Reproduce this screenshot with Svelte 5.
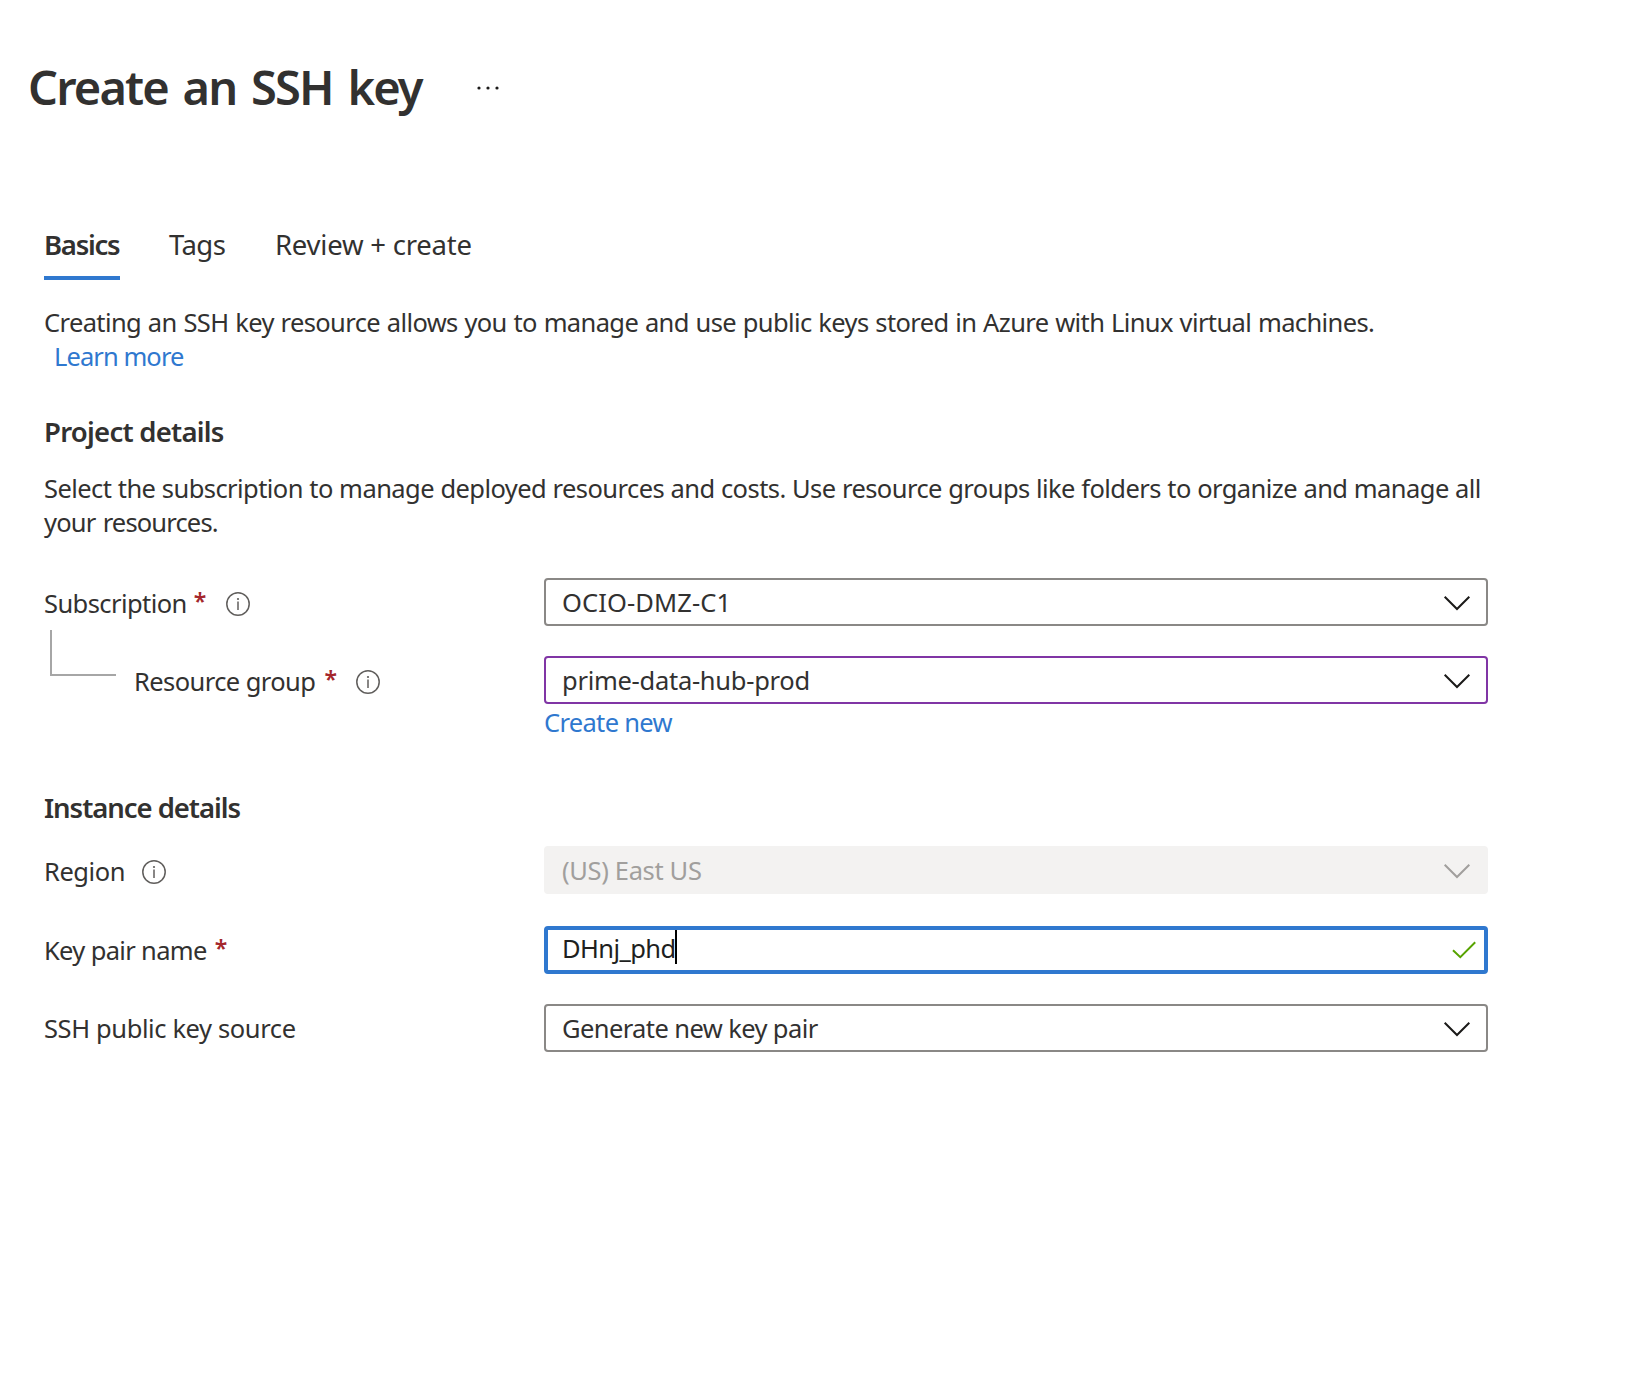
<script>
  let keyPairName = $state('DHnj_phd');
</script>

{#snippet chevron()}
  <svg class="chevron" width="28" height="16" viewBox="0 0 28 16" aria-hidden="true">
    <path d="M1.7 1.7 14 14 26.3 1.7" fill="none" stroke="currentColor" stroke-width="2" />
  </svg>
{/snippet}

{#snippet info()}
  <svg class="info" width="24" height="24" viewBox="0 0 24 24" aria-hidden="true">
    <circle cx="12" cy="12" r="11.2" fill="none" stroke="currentColor" stroke-width="1.5" />
    <path d="M12 9.4V18" stroke="currentColor" stroke-width="1.5" />
    <circle cx="12" cy="7" r="1.1" fill="currentColor" />
  </svg>
{/snippet}

<main>
  <header>
    <h1>Create an SSH key</h1>
    <svg class="more" width="22" height="4" viewBox="0 0 22 4" aria-label="More">
      <circle cx="2" cy="2" r="1.6" /><circle cx="11" cy="2" r="1.6" /><circle cx="20" cy="2" r="1.6" />
    </svg>
  </header>

  <nav>
    <span class="tab active">Basics</span>
    <span class="tab tags">Tags</span>
    <span class="tab review">Review + create</span>
  </nav>

  <p class="intro">
    Creating an SSH key resource allows you to manage and use public keys stored in Azure with Linux virtual machines.<br />
    <a class="learn" href="#learn">Learn more</a>
  </p>

  <section>
    <h2 class="project">Project details</h2>
    <p class="about">
      Select the subscription to manage deployed resources and costs. Use resource groups like folders to organize and manage all<br />
      <span class="tail">your resources.</span>
    </p>

    <div class="row first">
      <div class="label"><span class="sub">Subscription</span><b>*</b>{@render info()}</div>
      <div class="field"><span class="v-sub">OCIO-DMZ-C1</span>{@render chevron()}</div>
    </div>
    <div class="row second">
      <div class="label"><i class="branch"></i><span class="rg">Resource group</span><b>*</b>{@render info()}</div>
      <div class="field edited"><span class="v-rg">prime-data-hub-prod</span>{@render chevron()}</div>
    </div>
    <a class="create" href="#new">Create new</a>
  </section>

  <section>
    <h2 class="instance">Instance details</h2>
    <div class="row third">
      <div class="label region"><span>Region</span>{@render info()}</div>
      <div class="field disabled"><span class="v-reg">(US) East US</span>{@render chevron()}</div>
    </div>
    <div class="row fourth">
      <div class="label kp"><span>Key pair name</span><b>*</b></div>
      <div class="field focused">
        <span class="v-key">{keyPairName}</span><i class="caret"></i>
        <svg class="check" width="24" height="18" viewBox="0 0 24 18" aria-hidden="true">
          <path d="M1 9.2 8.3 16.2 23.2 1.3" fill="none" stroke="currentColor" stroke-width="2" />
        </svg>
      </div>
    </div>
    <div class="row fifth">
      <div class="label source"><span>SSH public key source</span></div>
      <div class="field"><span class="v-src">Generate new key pair</span>{@render chevron()}</div>
    </div>
  </section>
</main>

<style>
  :global(body) { background: #fff; }
  main {
    box-sizing: border-box;
    width: 1642px;
    min-height: 1396px;
    padding: 55px 0 0 44px;
    font: 25.5px/34px "Noto Sans", "Open Sans", sans-serif;
    color: #323130;
  }
  h1, h2, p { margin: 0; font-weight: 600; }
  p { font-weight: 400; white-space: nowrap; }
  a { color: #2f78cf; text-decoration: none; }

  header { display: flex; align-items: center; margin-left: -16px; height: 64px; }
  h1 { width: 449px; font-size: 47px; line-height: 64px; letter-spacing: -1.85px; word-spacing: 4.3px; white-space: nowrap; }
  .more { margin-top: 2px; fill: #1b1a19; }

  nav { display: flex; margin-top: 108px; font-size: 27.5px; line-height: 36px; white-space: nowrap; }
  .tab { padding-bottom: 13px; border-bottom: 4px solid transparent; letter-spacing: -0.23px; }
  .active { width: 76px; font-weight: 600; letter-spacing: -1.28px; border-color: #2f78cf; }
  .tags { margin-left: 49px; width: 106px; letter-spacing: -0.6px; }

  .intro { margin-top: 25px; letter-spacing: -0.62px; word-spacing: 0.73px; }
  .learn { margin-left: 10px; letter-spacing: -0.92px; word-spacing: 0; }
  h2 { font-size: 27.5px; line-height: 36px; }
  .project { margin-top: 41px; letter-spacing: -0.75px; }
  .instance { margin-top: 51px; letter-spacing: -1.05px; }
  .about { margin-top: 21px; letter-spacing: -0.56px; word-spacing: 0.27px; }
  .tail { letter-spacing: -0.84px; word-spacing: 1.5px; }

  .row { display: grid; grid-template-columns: 500px 944px; height: 48px; }
  .first { margin-top: 39px; }
  .second { margin-top: 30px; }
  .third { margin-top: 20px; }
  .fourth { margin-top: 32px; }
  .fifth { margin-top: 30px; }

  .label { display: flex; align-items: center; padding-top: 2px; white-space: nowrap; letter-spacing: -0.58px; }
  .label b { margin: -4px 0 0 7px; width: 13px; font-size: 23px; font-weight: 600; line-height: 34px; letter-spacing: 0; color: #a4262c; }
  .second b { margin-left: 9px; }
  .info { margin: 2px 0 0 19px; color: #605e5c; }
  .region { letter-spacing: -0.45px; }
  .region .info { margin-left: 17px; }
  .kp { padding-top: 0; letter-spacing: -0.66px; }
  .kp b { margin-left: 8px; }
  .source { padding-top: 0; letter-spacing: -0.39px; }
  .branch {
    box-sizing: border-box;
    align-self: flex-start;
    width: 66px;
    height: 46px;
    margin: -28px 18px 0 6px;
    border: solid #a6a6a6;
    border-width: 0 0 2px 2px;
  }

  .field {
    box-sizing: border-box;
    display: flex;
    align-items: center;
    height: 48px;
    padding: 0 15px 0 16px;
    border: 2px solid #8a8886;
    border-radius: 4px;
    white-space: nowrap;
  }
  .edited { border-color: #8035a5; }
  .disabled { background: #f3f2f1; border-color: #f3f2f1; color: #a19f9d; }
  .focused { border: 4px solid #2f78cf; padding: 0 8px 0 14px; color: #201f1e; }
  .chevron { margin: 1px 0 0 auto; color: #1b1a19; }
  .disabled .chevron { color: #a19f9d; }
  .check { margin-left: auto; color: #57a300; }
  .caret { width: 2px; height: 34px; margin: -6px 0 0 -1px; background: #000; }

  .v-sub { letter-spacing: 0.1px; }
  .v-rg { letter-spacing: -0.28px; }
  .v-reg { letter-spacing: -0.35px; }
  .v-key { letter-spacing: -0.6px; margin-top: -5px; }
  .v-src { letter-spacing: -0.6px; }
  .create { display: block; width: 200px; margin: 1px 0 0 500px; letter-spacing: -0.68px; }
</style>
